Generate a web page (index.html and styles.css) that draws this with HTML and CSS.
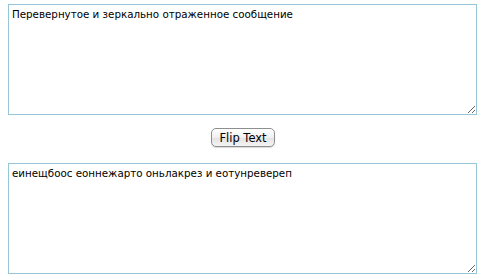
FILE: index.html
```html
<!DOCTYPE html>
<html lang="ru">
<head>
    <meta charset="UTF-8">
    <title>Flip Text</title>
    <link rel="stylesheet" href="styles.css">
</head>
<body>
    <textarea class="text-box" id="source">Перевернутое и зеркально отраженное сообщение</textarea>
    <div class="actions">
        <button class="flip-button" onclick="flipText()">Flip Text</button>
    </div>
    <textarea class="text-box" id="result">еинещбоос еоннежарто оньлакрез и еотунревереп</textarea>

    <script>
        function flipText() {
            const source = document.getElementById("source").value.toLowerCase();
            document.getElementById("result").value = source.split("").reverse().join("");
        }
    </script>
</body>
</html>
```

FILE: styles.css
```css
body {
    margin: 4px 8px;
    font-family: "DejaVu Sans", Verdana, sans-serif;
    background: #ffffff;
}
.text-box {
    display: block;
    box-sizing: border-box;
    width: 469px;
    height: 111px;
    margin: 0;
    padding: 2px 3px;
    border: 1px solid #94c6d8;
    font-family: "DejaVu Sans", Verdana, sans-serif;
    font-size: 10.3px;
    line-height: 14px;
    color: #000000;
    resize: both;
    outline: none;
}
.actions {
    display: flex;
    justify-content: center;
    padding: 13px 0 16px;
}
.flip-button {
    height: 19px;
    padding: 0 7px;
    border: 1px solid #8e8e8e;
    border-radius: 5px;
    background: linear-gradient(#ffffff, #f0f0f0 50%, #e2e2e2 51%, #f4f4f4);
    font-family: "DejaVu Sans", Verdana, sans-serif;
    font-size: 11.5px;
    color: #000000;
    box-shadow: 0 1px 1px rgba(0, 0, 0, 0.15);
}
```
